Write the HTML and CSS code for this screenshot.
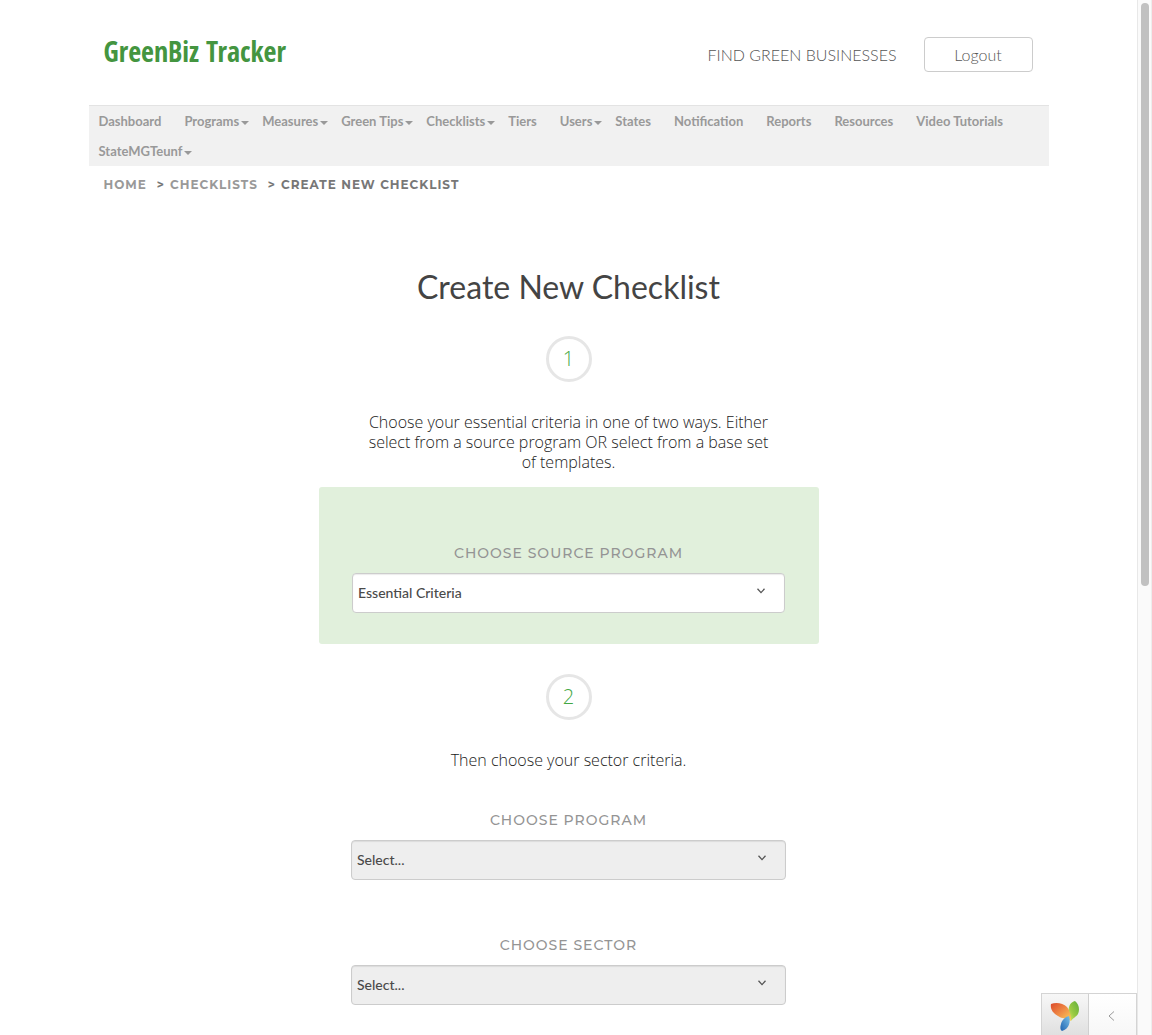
FILE: index.html
```html
<!DOCTYPE html>
<html lang="en">
<head>
<meta charset="utf-8">
<title>Create New Checklist - GreenBiz Tracker</title>
<link rel="stylesheet" href="styles.css">
</head>
<body>
<div class="viewport">
  <div class="page">
    <div class="container">
      <header class="header">
        <a class="logo" href="#">GreenBiz Tracker</a>
        <div class="header-actions">
          <a class="find-link" href="#">FIND GREEN BUSINESSES</a>
          <button class="logout" type="button">Logout</button>
        </div>
      </header>
      <nav class="nav">
        <ul class="nav-list">
          <li><a href="#">Dashboard</a></li>
          <li class="dropdown"><a href="#">Programs</a></li>
          <li class="dropdown"><a href="#">Measures</a></li>
          <li class="dropdown"><a href="#">Green Tips</a></li>
          <li class="dropdown"><a href="#">Checklists</a></li>
          <li><a href="#">Tiers</a></li>
          <li class="dropdown"><a href="#">Users</a></li>
          <li><a href="#">States</a></li>
          <li><a href="#">Notification</a></li>
          <li><a href="#">Reports</a></li>
          <li><a href="#">Resources</a></li>
          <li><a href="#">Video Tutorials</a></li>
          <li class="dropdown"><a href="#">StateMGTeunf</a></li>
        </ul>
      </nav>
      <div class="breadcrumb">
        <a href="#">HOME</a><span class="sep">&gt;</span><a href="#">CHECKLISTS</a><span class="sep">&gt;</span><span>CREATE NEW CHECKLIST</span>
      </div>
      <main class="main">
        <h1 class="title">Create New Checklist</h1>
        <div class="step">1</div>
        <p class="intro">Choose your essential criteria in one of two ways. Either select from a source program OR select from a base set of templates.</p>
        <div class="panel">
          <div class="field">
            <label for="source">CHOOSE SOURCE PROGRAM</label>
            <div class="select-wrap">
              <select id="source"><option>Essential Criteria</option></select>
              <svg class="chevron" viewBox="0 0 8 6"><path d="M.5.8 4 4.6 7.5.8"/></svg>
            </div>
          </div>
        </div>
        <div class="step">2</div>
        <p class="intro">Then choose your sector criteria.</p>
        <div class="field field-wide">
          <label for="program">CHOOSE PROGRAM</label>
          <div class="select-wrap">
            <select id="program"><option>Select...</option></select>
            <svg class="chevron" viewBox="0 0 8 6"><path d="M.5.8 4 4.6 7.5.8"/></svg>
          </div>
        </div>
        <div class="field field-wide">
          <label for="sector">CHOOSE SECTOR</label>
          <div class="select-wrap">
            <select id="sector"><option>Select...</option></select>
            <svg class="chevron" viewBox="0 0 8 6"><path d="M.5.8 4 4.6 7.5.8"/></svg>
          </div>
        </div>
      </main>
    </div>
    <div class="toolbar">
      <a class="toolbar-logo" href="#" aria-label="Yii debugger">
        <svg viewBox="0 0 30 32" width="30" height="32">
          <defs>
            <linearGradient id="orange" x1="0" y1="0" x2="1" y2="1"><stop offset="0" stop-color="#dc4a2b"/><stop offset=".5" stop-color="#ef8a45"/><stop offset="1" stop-color="#fbd35b"/></linearGradient>
            <linearGradient id="green" x1="1" y1="0" x2="0" y2="1"><stop offset="0" stop-color="#5fae3c"/><stop offset=".6" stop-color="#9bcb43"/><stop offset="1" stop-color="#e0e66a"/></linearGradient>
            <linearGradient id="blue" x1="1" y1="0" x2="0" y2="1"><stop offset="0" stop-color="#7ac0e8"/><stop offset="1" stop-color="#1e62b0"/></linearGradient>
          </defs>
          <path fill="url(#green)" d="M25 1c4 3 5 9 3 13-2 3-5 4-7 7-1-3-3-6-2.500-11C19 5 21 2 25 1z"/>
          <path fill="url(#orange)" d="M1 4c5-2 12-1 16 3 3 4 4 8 4 14-4-3-9-2-13-5C3 13 0 9 1 4z"/>
          <path fill="url(#blue)" d="M19 16c2 6 0 13-7 15-2-1-2-4-1-7 1-4 4-7 8-8z"/>
        </svg>
      </a>
      <button class="toolbar-toggle" type="button" aria-label="Expand toolbar">
        <svg viewBox="0 0 7 10" width="7" height="10"><path d="M6 .5 1 5l5 4.5"/></svg>
      </button>
    </div>
  </div>
  <div class="scrollbar"><div class="scrollbar-thumb"></div></div>
</div>
</body>
</html>
```
FILE: styles.css
```css
* { box-sizing: border-box; }
body {
  margin: 0;
  background: #fff;
  color: #444;
  font-family: Lato, "Liberation Sans", sans-serif;
}
a { color: inherit; text-decoration: none; }

.viewport {
  display: grid;
  grid-template-columns: 1fr 15px;
  height: 100vh;
  overflow: hidden;
}
.page { position: relative; overflow: hidden; }
.container { max-width: 960px; margin: 0 auto; }

.header {
  display: flex;
  justify-content: space-between;
  align-items: center;
  height: 105px;
  padding: 4px 16px 0 15px;
}
.logo {
  color: #449540;
  font: bold 28px/32px "Liberation Sans Narrow", "Open Sans Condensed", "Liberation Sans", sans-serif;
  padding-bottom: 8px;
}
.header-actions { display: flex; align-items: center; gap: 27px; }
.find-link { color: #555; font-size: 16px; font-weight: 300; }
.logout {
  width: 109px;
  height: 35px;
  border: 1px solid #ccc;
  border-radius: 4px;
  background: #fff;
  color: #555;
  font: 300 16px/20px Lato, sans-serif;
}

.nav { background: #f1f1f1; border-top: 1px solid #e3e3e3; }
.nav-list {
  display: flex;
  flex-wrap: wrap;
  margin: 0;
  padding: 0 0 0 10px;
  list-style: none;
}
.nav-list li {
  margin-right: 23px;
  color: #999;
  font-size: 13px;
  font-weight: 700;
  line-height: 30px;
}
.nav-list .dropdown { margin-right: 13px; }
.dropdown::after {
  content: "";
  display: inline-block;
  margin-left: 2px;
  vertical-align: 1px;
  border: 4px solid transparent;
  border-top-color: #999;
  border-bottom: 0;
}

.breadcrumb {
  display: flex;
  padding: 9px 15px 0;
  color: #777;
  font: 700 12px/20px Montserrat, Inter, sans-serif;
  letter-spacing: 1px;
}
.breadcrumb a { color: #999; }
.sep { padding: 0 5px 0 10px; }

.main {
  display: flex;
  flex-direction: column;
  align-items: center;
  padding-top: 67px;
}
.title { margin: 0 0 24px; font-size: 32px; font-weight: 400; line-height: 50px; }
.step {
  display: flex;
  justify-content: center;
  align-items: center;
  width: 46px;
  height: 46px;
  border: 3px solid #e6e6e6;
  border-radius: 50%;
  color: #43a843;
  font: 300 20px/20px "Open Sans", sans-serif;
}
.intro {
  max-width: 410px;
  margin: 30px 0 15px;
  color: #222;
  text-align: center;
  font: 300 16px/20px "Open Sans", sans-serif;
}
.panel {
  display: flex;
  justify-content: center;
  width: 500px;
  max-width: 100%;
  margin-bottom: 30px;
  padding: 56px 33px 31px;
  border-radius: 3px;
  background: #e1f0dc;
}
.field { width: 433px; max-width: 100%; }
.field-wide { width: 435px; margin: 25px 0 30px; }
.field label {
  display: block;
  margin-bottom: 10px;
  color: #949494;
  text-align: center;
  font: 500 14px/20px Montserrat, Inter, sans-serif;
  letter-spacing: 1px;
}
.select-wrap { position: relative; }
.select-wrap select {
  display: block;
  appearance: none;
  width: 100%;
  height: 40px;
  padding: 0 32px 0 5px;
  border: 1px solid #ccc;
  border-radius: 4px;
  background: #eee;
  box-shadow: inset 0 1px 1px rgba(0, 0, 0, .08);
  color: #4a4a4a;
  font: 500 14px/20px Lato, sans-serif;
}
.panel select { background: #fff; }
.chevron {
  position: absolute;
  top: 15px;
  right: 20px;
  width: 8px;
  height: 6px;
  fill: none;
  stroke: #555;
  stroke-width: 1.3;
  pointer-events: none;
}

.toolbar {
  position: absolute;
  right: 0;
  bottom: 0;
  display: flex;
  width: 96px;
  height: 42px;
  border: 1px solid #d4d4d4;
  border-bottom: 0;
}
.toolbar-logo {
  flex: 1;
  display: flex;
  justify-content: center;
  padding-top: 6px;
  background: linear-gradient(#f7f7f7, #e0e0e0);
  border-right: 1px solid #d0d0d0;
}
.toolbar-toggle {
  width: 47px;
  padding: 4px 2px 0 0;
  border: 0;
  background: linear-gradient(#fff, #f7f7f7);
}
.toolbar-toggle path { fill: none; stroke: #999; }

.scrollbar {
  padding: 3px 3px 0;
  background: #fafafa;
  border-left: 1px solid #e8e8e8;
  border-right: 1px solid #ededed;
}
.scrollbar-thumb {
  width: 8px;
  height: 56.5%;
  border-radius: 4px;
  background: #c1c1c1;
}
```
